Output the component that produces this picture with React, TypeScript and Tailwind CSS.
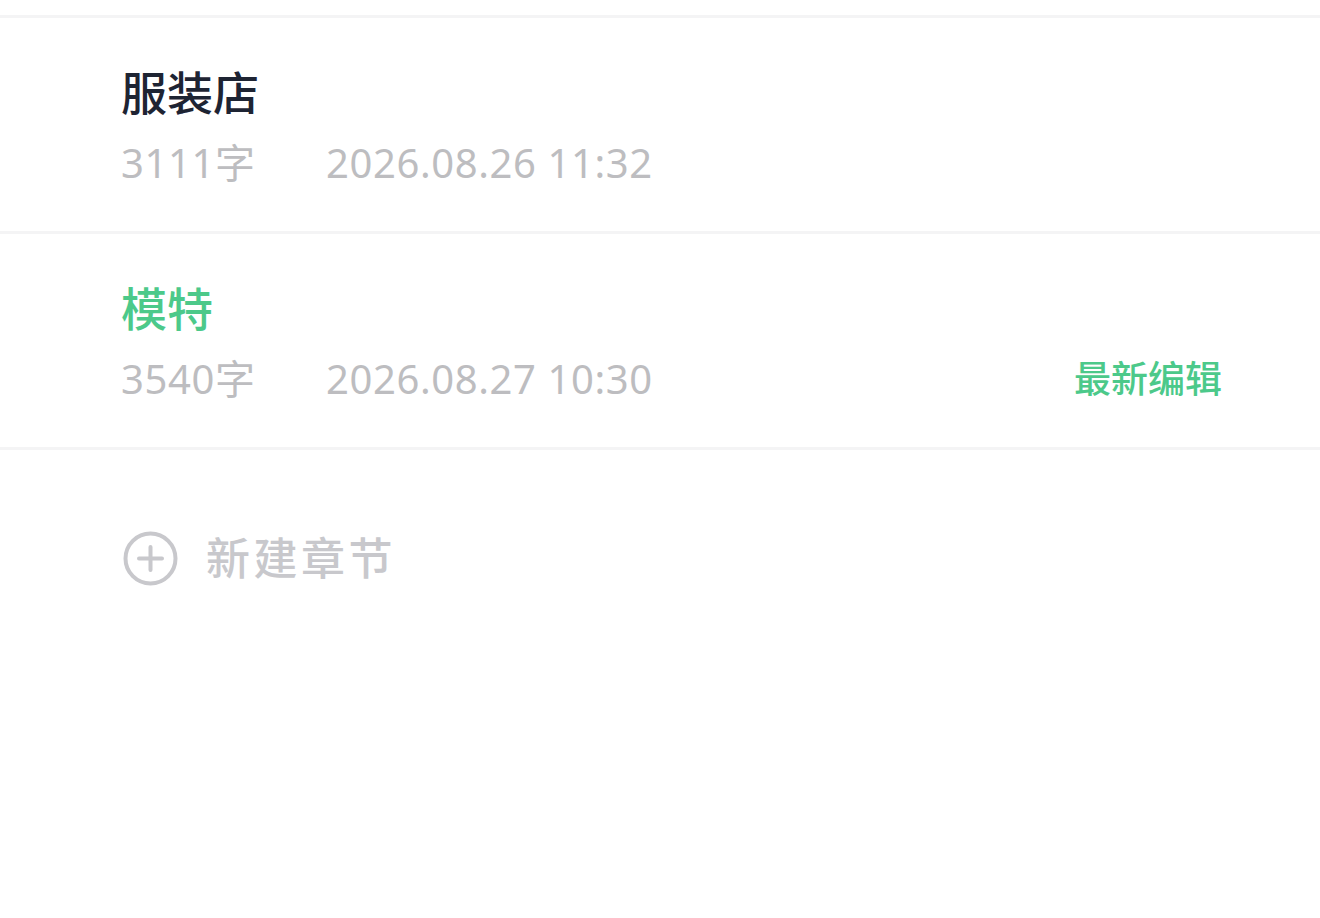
import React from "react";

const font = { fontFamily: '"Noto Sans", "Noto Sans CJK SC", sans-serif' };

function Row({ title, active, words, date }: { title: string; active?: boolean; words: string; date: string }) {
  return (
    <div className="h-[216px] flex flex-col justify-center pl-[121px] pr-[98px] border-b-[3px] border-[#f4f4f5]">
      <div className={`text-[46px] leading-[56px] font-medium ${active ? "text-[#4cc98a]" : "text-[#1e2433]"}`}>{title}</div>
      <div className="mt-[20px] flex items-center text-[40px] leading-[46px] tracking-[0.6px] text-[#bdbdc0]">
        <span className="w-[205px]">{words}</span>
        <span>{date}</span>
        {active && <span className="ml-auto text-[37px] tracking-normal font-medium text-[#4cc98a]">最新编辑</span>}
      </div>
    </div>
  );
}

export default function App() {
  return (
    <div className="w-[1320px] h-[918px] bg-white overflow-hidden" style={font}>
      <div className="h-[18px] border-b-[3px] border-[#f4f4f5]" />
      <Row title="服装店" words="3111字" date="2026.08.26 11:32" />
      <Row title="模特" active words="3540字" date="2026.08.27 10:30" />
      <div className="mt-[80px] pl-[123px] flex items-center gap-[28px]">
        <svg width="55" height="55" viewBox="0 0 55 55" fill="none">
          <circle cx="27.5" cy="27.5" r="25" stroke="#c8c8cc" strokeWidth="4" />
          <path d="M16 27.5H39M27.5 16V39" stroke="#c8c8cc" strokeWidth="4" strokeLinecap="round" />
        </svg>
        <span className="text-[44px] leading-[56px] font-medium tracking-[3.5px] text-[#c8c8cc]">新建章节</span>
      </div>
    </div>
  );
}
